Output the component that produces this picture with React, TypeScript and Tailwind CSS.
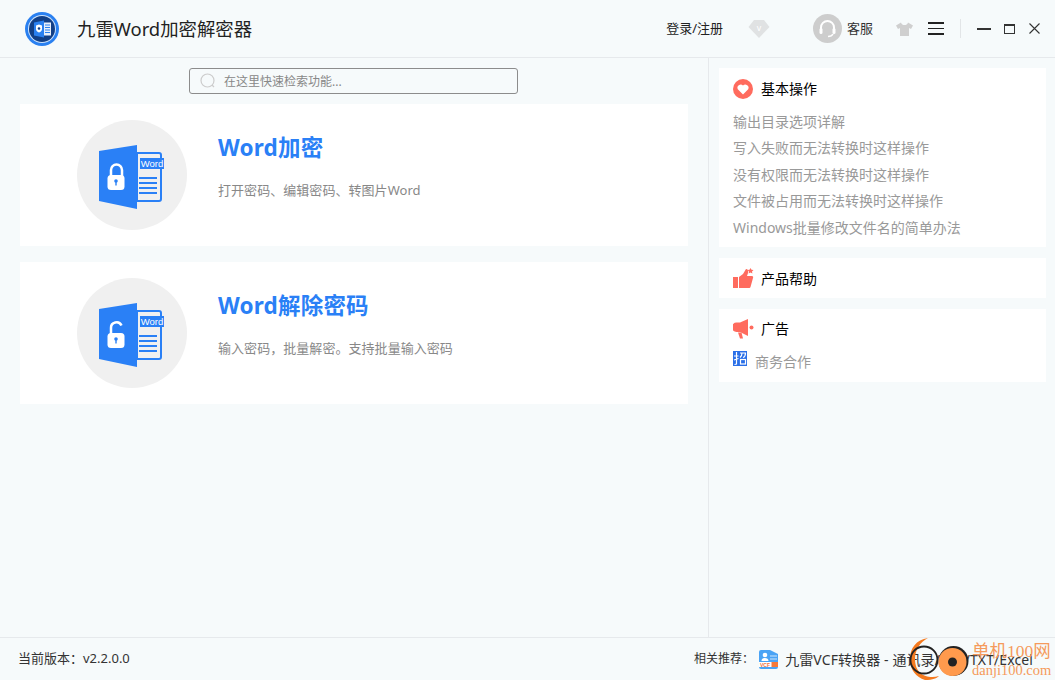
const font = { fontFamily: '"Noto Sans", "Noto Sans CJK SC", sans-serif' };

function AppLogo() {
  return (
    <svg width="34" height="34" viewBox="0 0 34 34">
      <circle cx="17" cy="17" r="17" fill="#2a80f0" />
      <circle cx="17" cy="17" r="14" fill="#cfe3fb" />
      <circle cx="17" cy="17" r="13" fill="#123f86" />
      <path d="M9 10.500 19 8.500V25.500L9 23.500Z" fill="#2a80f0" />
      <rect x="19" y="10.500" width="7" height="13" fill="#e8f0fb" />
      <path d="M20 13h5M20 15.500h5M20 18h5M20 20.500h5" stroke="#2a80f0" strokeWidth="1" />
      <path d="M14 12.500l3 1v3.500c0 2-1.500 3-3 3.500-1.500-.5-3-1.500-3-3.500v-3.500z" fill="#fff" />
      <circle cx="14" cy="16.500" r="1.300" fill="#123f86" />
    </svg>
  );
}

function DocIcon({ open }: { open?: boolean }) {
  return (
    <svg width="65" height="64" viewBox="0 0 65 64">
      <path d="M38 8h22a2 2 0 0 1 2 2v44a2 2 0 0 1-2 2H38z" fill="none" stroke="#2a80f6" strokeWidth="2" />
      <path d="M0 6 38 0V64L0 56Z" fill="#2a80f6" />
      <path d="M40 33h18M40 38h18M40 43h18M40 48h18" stroke="#2a80f6" strokeWidth="2.200" />
      <rect x="41" y="13" width="24" height="11" fill="#2a80f6" />
      <text x="53" y="22" textAnchor="middle" fontSize="9.500" fill="#fff" fontFamily="Liberation Sans, sans-serif">Word</text>
      {open ? (
        <path d="M12 32v-7a5.500 5.500 0 0 1 10.500-2.500" fill="none" stroke="#fff" strokeWidth="2.500" />
      ) : (
        <path d="M12 32v-7a5.500 5.500 0 0 1 11 0v7" fill="none" stroke="#fff" strokeWidth="2.500" />
      )}
      <rect x="8.500" y="30" width="17" height="15" rx="3.500" fill="#fff" />
      <circle cx="17" cy="36" r="1.800" fill="#2a80f6" />
      <rect x="16.300" y="36" width="1.400" height="4.500" fill="#2a80f6" />
    </svg>
  );
}

function HeartIcon() {
  return (
    <svg width="20" height="20" viewBox="0 0 20 20">
      <circle cx="10" cy="10" r="10" fill="#ff6b5e" />
      <path d="M10 15.500 4.800 10.200a3.200 3.200 0 0 1 5.200-3.600 3.200 3.200 0 0 1 5.200 3.600z" fill="#fff" />
    </svg>
  );
}

function ThumbIcon() {
  return (
    <svg width="21" height="20" viewBox="0 0 21 20">
      <rect x="0" y="9" width="5" height="11" fill="#ff6b5e" />
      <path d="M6 9l4-3 3-5c2 0 2.500 2 2 4l-1 3h5c1 0 1.500 1 1 2l-2.500 9c-.2.600-.6 1-1.200 1H6z" fill="#ff6b5e" />
      <path d="M17.500 0l1 1.800 2 .3-1.500 1.400.4 2-1.900-1-1.900 1 .4-2-1.500-1.400 2-.3z" fill="#ff6b5e" />
    </svg>
  );
}

function HornIcon() {
  return (
    <svg width="21" height="20" viewBox="0 0 21 20">
      <path d="M15 0v17L7 13H3.500a3.500 3.500 0 0 1 0-9.500H7z" fill="#ff6b5e" />
      <path d="M5 13.500h3.500l1.500 6H7z" fill="#ff6b5e" />
      <circle cx="18.500" cy="8.500" r="2" fill="#ff6b5e" />
    </svg>
  );
}

function ZhaoIcon() {
  return (
    <svg width="14" height="15" viewBox="0 0 14 15">
      <rect width="14" height="15" fill="#2a6fe8" />
      <path d="M3.500 1v12L1.500 13.500M1 5h4.500M1 9l4.500-1.500" stroke="#fff" strokeWidth="1.200" fill="none" />
      <path d="M7 2h5.500c0 2.500-1 4-2.500 4.500M9 2c0 2-.7 3.500-2 4.500" stroke="#fff" strokeWidth="1.200" fill="none" />
      <rect x="7.500" y="8.500" width="5" height="4.500" stroke="#fff" strokeWidth="1.200" fill="none" />
    </svg>
  );
}

function VcfIcon() {
  return (
    <svg className="ml-[5px]" width="19" height="19" viewBox="0 0 19 19">
      <path d="M0 2a2 2 0 0 1 2-2h9l8 4v13a2 2 0 0 1-2 2H2a2 2 0 0 1-2-2z" fill="#4aa3f5" />
      <circle cx="6" cy="5" r="2.300" fill="#fff" />
      <path d="M2.500 11c0-2 1.500-3 3.500-3s3.500 1 3.500 3z" fill="#fff" />
      <path d="M11 6h7M11 9h7" stroke="#cfe6fb" />
      <rect y="12" width="19" height="5" fill="#fff" />
      <text x="6" y="16.500" textAnchor="middle" fontSize="5" fontWeight="700" fill="#f0703a" fontFamily="Liberation Sans, sans-serif">VCF</text>
      <rect x="12.500" y="12" width="6.500" height="5" fill="#f5793a" />
    </svg>
  );
}

// danji100 watermark stamped over the footer
function Watermark() {
  return (
    <div className="absolute right-0 bottom-0 h-[44px] w-[150px] pointer-events-none">
      <svg className="absolute left-0 top-0" width="68" height="44" viewBox="0 0 68 44">
        <path d="M23 2C11 4 5 12 5 23s6 18 15 21c8 0 12-2 14-4-10 3-24 0-24-17C10 14 15 6 23 2z" fill="#f57a1f" />
        <circle cx="19" cy="24" r="13.500" fill="none" stroke="#222" strokeWidth="1.800" />
        <circle cx="48.500" cy="25" r="15" fill="#222" />
        <circle cx="47.500" cy="26" r="14" fill="#ff9a4d" />
        <circle cx="47.500" cy="26" r="4.500" fill="#222" />
      </svg>
      <div className="absolute left-[67px] top-[5px] text-[17.500px] leading-[20px] text-[#f59a5c] whitespace-nowrap font-['Liberation_Serif','Noto_Sans_CJK_SC',serif]">单机100网</div>
      <div className="absolute left-[67px] top-[25px] text-[14.500px] leading-[18px] text-[#f59a5c] whitespace-nowrap font-['Liberation_Serif',serif]">danji100.com</div>
    </div>
  );
}

function HelpLink({ children }: { children: string }) {
  return <div className="text-[14px] leading-[26.400px] text-[#999]">{children}</div>;
}

function TaskCard({ title, desc, open }: { title: string; desc: string; open?: boolean }) {
  return (
    <div className="h-[142px] bg-white flex items-start pl-[57px] pt-[16px]">
      <div className="w-[110px] h-[110px] rounded-full bg-[#f0f0f0] flex items-center justify-center pr-[1px] pt-[4px]">
        <DocIcon open={open} />
      </div>
      <div className="ml-[31px]">
        <div className="text-[22.500px] tracking-[0.2px] leading-[32px] mt-[12px] font-bold text-[#2a80f6]">{title}</div>
        <div className="text-[13px] tracking-[0.05px] leading-[20px] mt-[16px] text-[#888]">{desc}</div>
      </div>
    </div>
  );
}

export default function App() {
  return (
    <div style={font} className="w-[1055px] h-[680px] bg-[#f6fafb] flex flex-col relative overflow-hidden">
      <header className="h-[58px] shrink-0 border-b border-[#e6e9ec] flex items-center pl-[25px] pr-[15px]">
        <AppLogo />
        <div className="ml-[18px] text-[18.400px] text-[#222]">九雷Word加密解密器</div>
        <div className="ml-auto flex items-center">
          <span className="text-[13px] text-[#222]">登录/注册</span>
          <svg className="ml-[25px]" width="22" height="20" viewBox="0 0 22 20">
            <path d="M6 1h10l5.500 7L11 19 .5 8z" fill="#e0e2e3" />
            <text x="11" y="12" textAnchor="middle" fontSize="9" fill="#fff" fontFamily="Liberation Sans, sans-serif">v</text>
          </svg>
          <div className="ml-[43px] w-[29px] h-[29px] rounded-full bg-[#cdcdcd] flex items-center justify-center">
            <svg width="21" height="21" viewBox="0 0 21 21" fill="none">
              <path d="M4 12V9.500a6.500 6.500 0 0 1 13 0V12" stroke="#fff" strokeWidth="2" />
              <rect x="2.500" y="10" width="3" height="6" rx="1.500" fill="#fff" />
              <rect x="15.500" y="10" width="3" height="6" rx="1.500" fill="#fff" />
              <path d="M16 16c-1 2-3 2.500-5 2.500" stroke="#fff" strokeWidth="1.500" />
            </svg>
          </div>
          <span className="ml-[5px] text-[13px] text-[#333]">客服</span>
          <svg className="ml-[23px]" width="17" height="14" viewBox="0 0 17 14">
            <path d="M5 .5 0 3.500l2 3.500 2-1v8h9V6l2 1 2-3.500-5-3c-.5 2-2 2.500-3.500 2.500S5.500 2.500 5 .5z" fill="#cfcfcf" />
          </svg>
          <div className="ml-[15px] w-[16px] flex flex-col gap-[4px]">
            <div className="h-[1.500px] bg-[#222]" />
            <div className="h-[1.500px] bg-[#222]" />
            <div className="h-[1.500px] bg-[#222]" />
          </div>
          <div className="ml-[16px] w-px h-[19px] bg-[#e2e5e7]" />
          <div className="ml-[16px] w-[14px] h-[2px] bg-[#333]" />
          <div className="ml-[13px] w-[11px] h-[10px] border border-[#333] border-t-2" />
          <svg className="ml-[14px]" width="11" height="11" viewBox="0 0 11 11">
            <path d="M.5.5l10 10M10.500.5l-10 10" stroke="#333" strokeWidth="1.100" />
          </svg>
        </div>
      </header>

      <main className="flex-1 flex min-h-0">
        <section className="w-[709px] shrink-0 border-r border-[#e6e9ec] pl-[20px] pr-[20px] pt-[10px]">
          <div className="ml-[169px] w-[329px] h-[26px] border border-[#8c8c8c] rounded-[3px] flex items-center pl-[10px]">
            <svg width="16" height="16" viewBox="0 0 16 16" fill="none">
              <circle cx="7.500" cy="7.500" r="6.500" stroke="#ccc" strokeWidth="1.200" />
              <path d="M12 12l2 2" stroke="#ccc" strokeWidth="1.200" />
            </svg>
            <span className="ml-[8px] mt-[1px] text-[12px] text-[#888]">在这里快速检索功能...</span>
          </div>
          <div className="mt-[10px] flex flex-col gap-[16px]">
            <TaskCard title="Word加密" desc="打开密码、编辑密码、转图片Word" />
            <TaskCard title="Word解除密码" desc="输入密码，批量解密。支持批量输入密码" open />
          </div>
        </section>

        <aside className="flex-1 pl-[10px] pr-[9px] pt-[10px] flex flex-col gap-[11px]">
          <div className="h-[179px] bg-white pl-[14px] pt-[11px]">
            <div className="flex items-center h-[20px]">
              <HeartIcon />
              <span className="ml-[8px] mb-[1px] text-[14px] text-black">基本操作</span>
            </div>
            <div className="mt-[10px]">
              <HelpLink>输出目录选项详解</HelpLink>
              <HelpLink>写入失败而无法转换时这样操作</HelpLink>
              <HelpLink>没有权限而无法转换时这样操作</HelpLink>
              <HelpLink>文件被占用而无法转换时这样操作</HelpLink>
              <HelpLink>Windows批量修改文件名的简单办法</HelpLink>
            </div>
          </div>
          <div className="h-[40px] bg-white pl-[14px] flex items-center">
            <ThumbIcon />
            <span className="ml-[7px] mt-[1px] text-[14px] text-black">产品帮助</span>
          </div>
          <div className="h-[73px] bg-white pl-[14px] pt-[10px]">
            <div className="flex items-center h-[20px]">
              <HornIcon />
              <span className="ml-[7px] mb-[1px] text-[14px] text-black">广告</span>
            </div>
            <div className="flex items-start mt-[12px]">
              <ZhaoIcon />
              <span className="ml-[8px] mt-[1px] text-[14px] leading-[20px] text-[#999]">商务合作</span>
            </div>
          </div>
        </aside>
      </main>

      <footer className="h-[43px] shrink-0 border-t border-[#e6e9ec] flex items-center pl-[18px] pr-[22px]">
        <span className="text-[13px] text-[#333]">当前版本：v2.2.0.0</span>
        <div className="ml-auto flex items-center">
          <span className="text-[12px] text-[#333]">相关推荐：</span>
          <VcfIcon />
          <span className="ml-[7px] text-[14px] tracking-[0.1px] text-[#333]">九雷VCF转换器 - 通讯录/VCF/TXT/Excel</span>
        </div>
      </footer>
      <Watermark />
    </div>
  );
}
